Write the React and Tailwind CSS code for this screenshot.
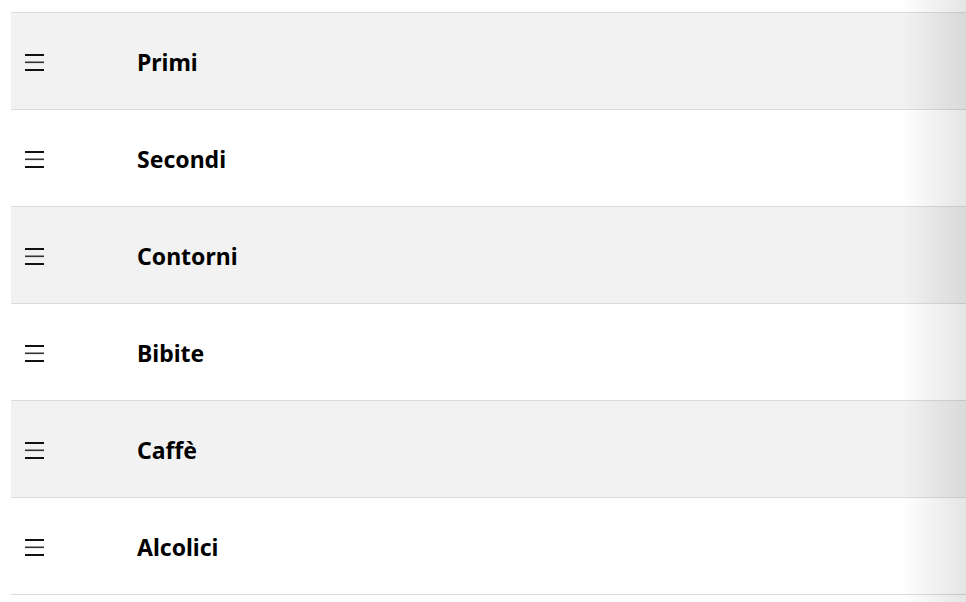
import React from "react";

const items = ["Primi", "Secondi", "Contorni", "Bibite", "Caffè", "Alcolici"];

function Burger() {
  return (
    <svg width="19" height="17" viewBox="0 0 19 17" className="block mt-[3px]">
      <rect x="0" y="0" width="19" height="2" fill="#111" />
      <rect x="0" y="7.5" width="19" height="1.6" fill="#333" />
      <rect x="0" y="15" width="19" height="2" fill="#111" />
    </svg>
  );
}

export default function App() {
  return (
    <div className="relative w-[966px] h-[602px] overflow-hidden bg-white" style={{ fontFamily: "'Noto Sans', 'Open Sans', sans-serif" }}>
      <div className="pt-[12px] pl-[11px]">
        <div className="border-t border-[#dcdcdc]">
          {items.map((name, i) => (
            <div
              key={name}
              className={`flex items-center h-[97px] border-b border-[#dcdcdc] ${i % 2 === 0 ? "bg-[#f2f2f2]" : "bg-white"}`}
            >
              <div className="w-[126px] pl-[14px] flex items-center">
                <Burger />
              </div>
              <span className="text-[23px] font-bold text-black leading-none mt-[3px]">{name}</span>
            </div>
          ))}
        </div>
      </div>
      <div className="absolute right-0 top-0 h-full w-[66px] bg-gradient-to-l from-[rgba(0,0,0,0.1)] to-transparent pointer-events-none" />
    </div>
  );
}
